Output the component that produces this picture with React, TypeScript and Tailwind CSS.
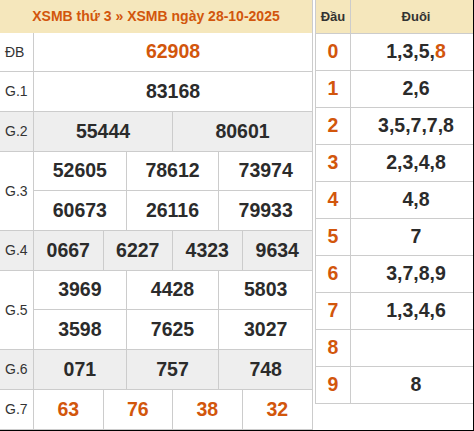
import React from 'react';

type Row = { label: string; lines: string[][]; grey?: boolean; orange?: boolean };

const ROWS: Row[] = [
  { label: 'ĐB', lines: [['62908']], orange: true },
  { label: 'G.1', lines: [['83168']] },
  { label: 'G.2', lines: [['55444', '80601']], grey: true },
  { label: 'G.3', lines: [['52605', '78612', '73974'], ['60673', '26116', '79933']] },
  { label: 'G.4', lines: [['0667', '6227', '4323', '9634']], grey: true },
  { label: 'G.5', lines: [['3969', '4428', '5803'], ['3598', '7625', '3027']] },
  { label: 'G.6', lines: [['071', '757', '748']], grey: true },
  { label: 'G.7', lines: [['63', '76', '38', '32']], orange: true },
];

const LOTO: { head: string; tail: React.ReactNode }[] = [
  { head: '0', tail: <>1,3,5,<span className="text-[#d2560c]">8</span></> },
  { head: '1', tail: '2,6' },
  { head: '2', tail: '3,5,7,7,8' },
  { head: '3', tail: '2,3,4,8' },
  { head: '4', tail: '4,8' },
  { head: '5', tail: '7' },
  { head: '6', tail: '3,7,8,9' },
  { head: '7', tail: '1,3,4,6' },
  { head: '8', tail: '' },
  { head: '9', tail: '8' },
];

const COLS: Record<number, string> = {
  1: 'grid-cols-1',
  2: 'grid-cols-2',
  3: 'grid-cols-3',
  4: 'grid-cols-4',
};

function PrizeRow({ row, first }: { row: Row; first: boolean }) {
  return (
    <div className={`flex border-b border-[#cccccc] ${row.grey ? 'bg-[#eeeeee]' : 'bg-white'}`}>
      <div className="w-[34px] shrink-0 border-r border-[#cccccc] flex items-center pl-[5px] text-[14px] text-[#333333]">
        {row.label}
      </div>
      <div className="flex-1 flex flex-col">
        {row.lines.map((line, li) => (
          <div
            key={li}
            className={`grid ${COLS[line.length]} ${first ? 'h-[38px]' : 'h-[39px]'} ${
              li < row.lines.length - 1 ? 'border-b border-[#cccccc]' : ''
            }`}
          >
            {line.map((n, i) => (
              <div
                key={i}
                className={`flex items-center justify-center font-bold text-[19.5px] ${
                  i < line.length - 1 ? 'border-r border-[#cccccc]' : ''
                } ${row.orange ? 'text-[#d2560c]' : 'text-[#2b2b2b]'}`}
              >
                {n}
              </div>
            ))}
          </div>
        ))}
      </div>
    </div>
  );
}

export default function App() {
  return (
    <div
      className="w-[474px] h-[431px] overflow-hidden bg-white relative flex gap-[2px]"
      style={{ fontFamily: '"Liberation Sans", Arial, sans-serif' }}
    >
      {/* Results table */}
      <div className="w-[313px] shrink-0 border-r border-[#cccccc] flex flex-col">
        <div className="h-[33px] bg-[#f5e7bc] flex items-center justify-center font-bold text-[14px] text-[#d2560c]">
          XSMB thứ 3 » XSMB ngày 28-10-2025
        </div>
        {ROWS.map((r, i) => (
          <PrizeRow key={r.label} row={r} first={i === 0} />
        ))}
      </div>

      {/* Loto head / tail table */}
      <div className="w-[166px] shrink-0 self-start border-l border-[#cccccc]">
        <div className="flex h-[34px] bg-[#f5e7bc] border-b border-[#cccccc] font-bold text-[13px] text-[#333333]">
          <div className="w-[35px] border-r border-[#cccccc] flex items-center justify-center">Đầu</div>
          <div className="flex-1 flex items-center justify-center">Đuôi</div>
        </div>
        {LOTO.map((l) => (
          <div key={l.head} className="flex h-[37px] border-b border-[#cccccc] font-bold text-[19.5px]">
            <div className="w-[35px] border-r border-[#cccccc] flex items-center justify-center text-[#d2560c]">
              {l.head}
            </div>
            <div className="flex-1 flex items-center justify-center text-[#2b2b2b]">{l.tail}</div>
          </div>
        ))}
      </div>

      {/* screenshot frame edges */}
      <div className="absolute right-0 top-0 h-full w-[1px] bg-black" />
      <div className="absolute left-0 bottom-0 w-full h-[1px] bg-black" />
    </div>
  );
}
